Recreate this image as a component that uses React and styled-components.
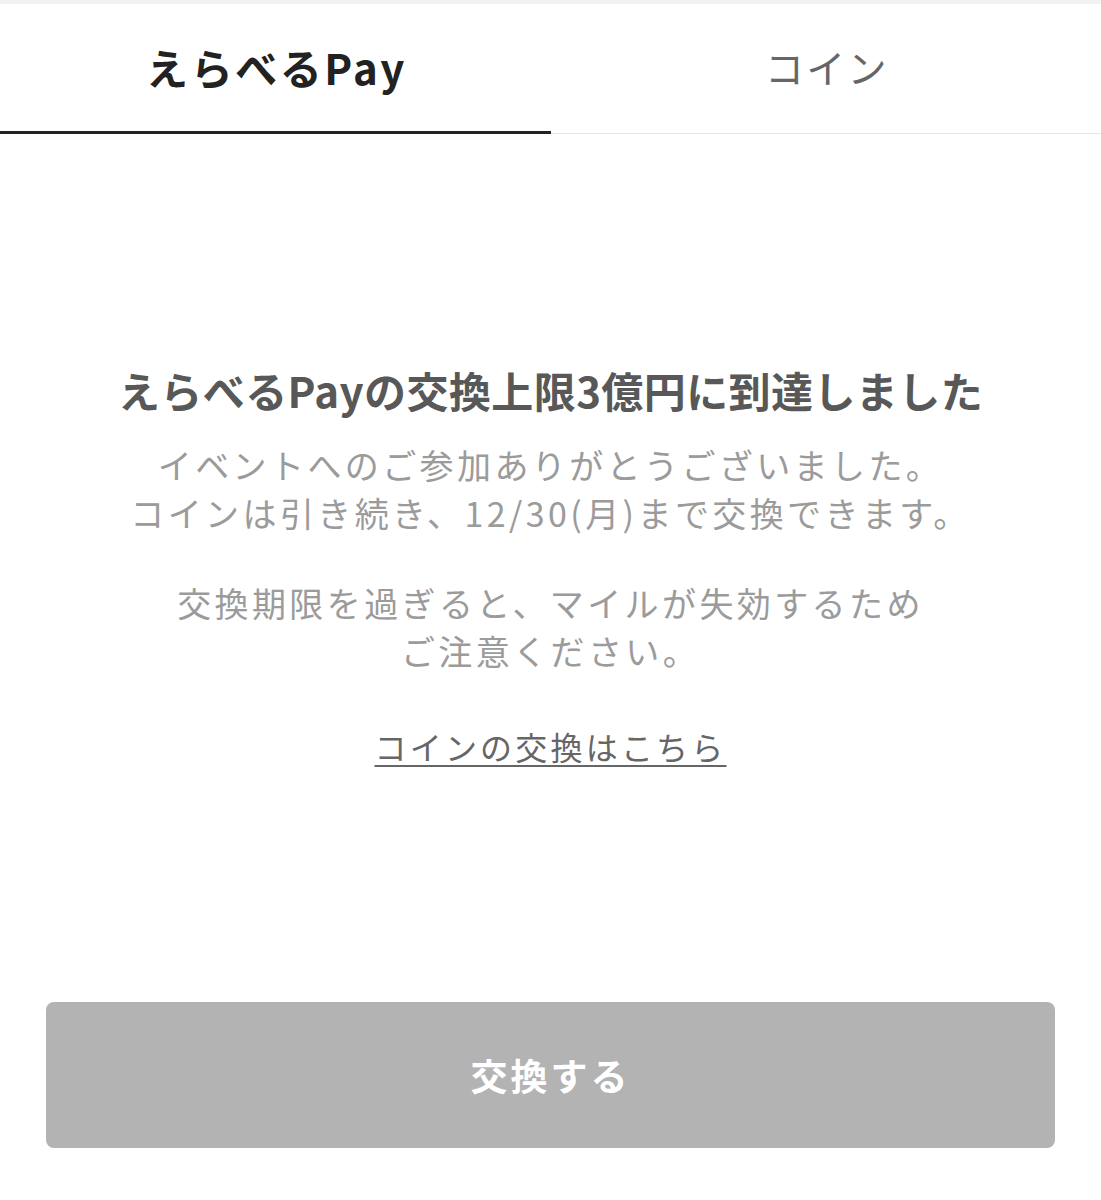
import React, { useState } from 'react'
import styled, { createGlobalStyle } from 'styled-components'

const GlobalStyle = createGlobalStyle`
    body {
        margin: 0;
        background: #fff;
        font-family: "Noto Sans CJK JP", "Noto Sans", sans-serif;
    }
`

const Page = styled.div`
    width: 1101px;
    min-height: 1200px;
    border-top: 4px solid #f2f2f2;
    box-sizing: border-box;
`

const TabBar = styled.div`
    display: flex;
    height: 129px;
    border-bottom: 1px solid #e6e6e6;
`

const Tab = styled.button`
    flex: 1;
    display: flex;
    align-items: center;
    justify-content: center;
    margin-bottom: -1px;
    padding: 0 0 3px 0.06em;
    border: none;
    border-bottom: 3px solid ${p => (p.$active ? '#222' : 'transparent')};
    background: none;
    font-family: inherit;
    font-size: ${p => (p.$active ? '42px' : '39px')};
    font-weight: ${p => (p.$active ? 700 : 400)};
    letter-spacing: 0.06em;
    color: ${p => (p.$active ? '#222' : '#666')};
    cursor: pointer;
`

const Content = styled.div`
    display: flex;
    flex-direction: column;
    align-items: center;
    text-align: center;
    padding-top: 228px;
`

const Title = styled.h2`
    margin: 0;
    font-size: 42px;
    line-height: 56px;
    font-weight: 700;
    letter-spacing: 0.01em;
    color: #585858;
`

const Message = styled.p`
    margin: ${p => p.$top || 0}px 0 0;
    font-size: 34px;
    line-height: 48px;
    letter-spacing: 0.1em;
    color: #9b9b9b;
`

const Link = styled.a`
    margin-top: 47px;
    font-size: 32px;
    line-height: 48px;
    letter-spacing: 0.1em;
    color: #666;
    text-decoration: underline;
    text-decoration-thickness: 2px;
    text-underline-offset: 5px;
    cursor: pointer;
`

const Footer = styled.div`
    padding: 0 46px;
    margin-top: 232px;
`

const SubmitButton = styled.button`
    width: 100%;
    height: 146px;
    border: none;
    border-radius: 8px;
    background: #b3b3b3;
    color: #fff;
    font-family: inherit;
    font-size: 37px;
    font-weight: 700;
    letter-spacing: 0.08em;
    cursor: not-allowed;
`

export default function App() {
    const [tab, setTab] = useState('pay')

    return (
        <>
            <GlobalStyle />
            <Page>
                <TabBar>
                    <Tab $active={tab === 'pay'} onClick={() => setTab('pay')}>えらべるPay</Tab>
                    <Tab $active={tab === 'coin'} onClick={() => setTab('coin')}>コイン</Tab>
                </TabBar>
                <Content>
                    <Title>えらべるPayの交換上限3億円に到達しました</Title>
                    <Message $top={23}>
                        イベントへのご参加ありがとうございました。<br />
                        コインは引き続き、12/30(月)まで交換できます。
                    </Message>
                    <Message $top={42}>
                        交換期限を過ぎると、マイルが失効するため<br />
                        ご注意ください。
                    </Message>
                    <Link>コインの交換はこちら</Link>
                </Content>
                <Footer>
                    <SubmitButton disabled>交換する</SubmitButton>
                </Footer>
            </Page>
        </>
    )
}
